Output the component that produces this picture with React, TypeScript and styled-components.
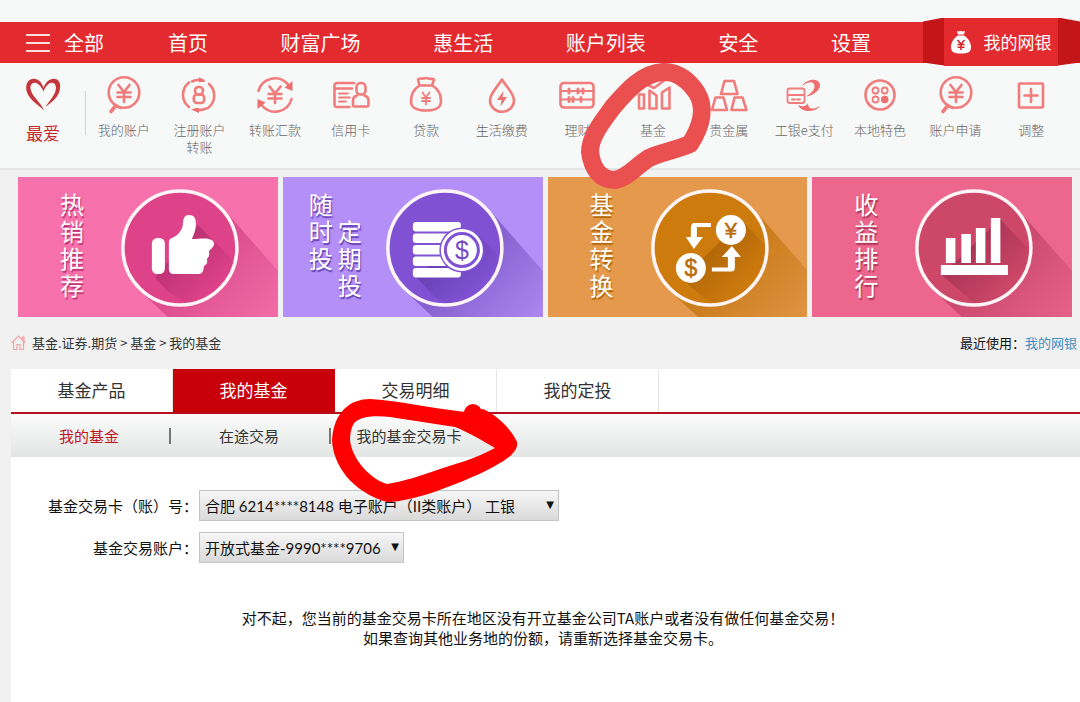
import React from "react";
import styled, { createGlobalStyle, css } from "styled-components";

const GlobalStyle = createGlobalStyle`
  *, *::before, *::after { box-sizing: border-box; }
  body {
    margin: 0;
    background: #f1f1f1;
    color: #222;
    font-family: "Noto Sans CJK SC", "Noto Sans", sans-serif;
    font-weight: 400;
  }
  a { color: inherit; text-decoration: none; }
  button, select { font: inherit; color: inherit; }
  ul { list-style: none; margin: 0; padding: 0; }
`;

const Page = styled.div`
  position: relative;
  display: flex;
  flex-direction: column;
  min-height: 100vh;
  overflow: hidden;
`;

/* ---------- top bar ---------- */

const Header = styled.header`
  padding-top: 22px;
  background: #f7f8f8;
  border-bottom: 2px solid #e4e5e5;
`;

const TopBar = styled.nav`
  display: flex;
  align-items: center;
  height: 41px;
  background: #e32a2f;
  color: #fff;
  font-size: 20px;
  line-height: 28px;
`;

const AllButton = styled.button`
  display: flex;
  align-items: center;
  gap: 14px;
  margin: 0 64px 0 26px;
  padding: 0;
  border: 0;
  background: none;
  white-space: nowrap;
`;

const MenuBars = styled.svg`
  width: 24px;
  height: 20px;
`;

const TopLinks = styled.ul`
  flex: 1;
  display: flex;
  justify-content: space-between;
  padding-right: 52px;
  white-space: nowrap;
`;

const Ribbon = styled.a`
  display: flex;
  height: 48px;
  margin-bottom: 2px;
  font-size: 17px;
  white-space: nowrap;
`;

const Fold = styled.span<{ $side: "left" | "right" }>`
  width: ${(p) => (p.$side === "left" ? 21 : 22)}px;
  background: #c41518;
  clip-path: ${(p) =>
    p.$side === "left"
      ? "polygon(0 4px, 100% 0, 100% 100%, 0 45px)"
      : "polygon(0 0, 100% 4px, 100% 45px, 0 100%)"};
`;

const RibbonFace = styled.span`
  display: flex;
  align-items: center;
  justify-content: center;
  gap: 13px;
  width: 114px;
  background: #e32a2f;
`;

const BagIcon = styled.svg`
  width: 20px;
  height: 24px;
`;

/* ---------- shortcuts ---------- */

const Shortcuts = styled.div`
  display: flex;
  align-items: flex-start;
  height: 105px;
  padding: 14px 11px 0 0;
`;

const Favourite = styled.a`
  display: flex;
  flex-direction: column;
  align-items: center;
  gap: 8px;
  width: 86px;
  color: #c4262e;
  font-size: 17px;
  line-height: 24px;
`;

const Divider = styled.span`
  width: 1px;
  height: 44px;
  margin: 14px 0 0 -1px;
  background: #d5d5d5;
`;

const ShortcutList = styled.ul`
  flex: 1;
  display: grid;
  grid-template-columns: repeat(13, 1fr);
`;

const Shortcut = styled.a`
  display: flex;
  flex-direction: column;
  align-items: center;
  gap: 8px;
  color: #666;
  font-size: 13px;
  font-weight: 300;
  line-height: 17px;
  text-align: center;
  white-space: pre-line;
`;

const Glyph = styled.svg`
  width: 36px;
  height: 36px;
  overflow: visible;
  fill: none;
  stroke: #f07c7c;
  stroke-width: 2.6;
  stroke-linecap: round;
  stroke-linejoin: round;

  .solid { fill: #ee6f6f; stroke: none; }
  .thin { stroke-width: 1.8; }
`;

/* ---------- banners ---------- */

const Banners = styled.section`
  display: grid;
  grid-template-columns: repeat(4, 1fr);
  gap: 5px;
  padding: 7px 8px 0 18px;
`;

const Banner = styled.a<{ $bg: string; $inset: number; $shade: string }>`
  position: relative;
  display: flex;
  gap: 5px;
  height: 140px;
  padding: 13px 0 0 ${(p) => p.$inset}px;
  background: ${(p) => p.$bg};
  color: #fff;
  font-size: 24px;
  line-height: 27px;
  text-shadow: 1px 2px 1px ${(p) => p.$shade};
`;

const Column = styled.span<{ $lowered?: boolean }>`
  position: relative;
  width: 24px;
  padding-top: ${(p) => (p.$lowered ? 27 : 0)}px;
  word-break: break-all;
`;

const Art = styled.svg`
  position: absolute;
  inset: 0;
  width: 100%;
  height: 100%;
  text {
    font-family: "Liberation Sans", sans-serif;
    text-anchor: middle;
    text-shadow: none;
  }
`;

/* ---------- breadcrumb ---------- */

const CrumbBar = styled.div`
  display: flex;
  justify-content: space-between;
  align-items: center;
  height: 52px;
  padding: 0 3px 0 11px;
  font-size: 13px;
  line-height: 20px;
`;

const Crumbs = styled.nav`
  display: flex;
  align-items: center;
  gap: 6px;
  color: #333;
`;

const HomeIcon = styled.svg`
  width: 15px;
  height: 16px;
`;

const Recent = styled.div`
  display: flex;
  color: #111;
  a { color: #3f8fc0; }
`;

/* ---------- content ---------- */

const Content = styled.main`
  flex: 1;
  margin-left: 11px;
  background: #fff;
`;

const Tabs = styled.nav`
  display: flex;
  height: 45px;
  border-bottom: 2px solid #b5101c;
`;

const Tab = styled.a<{ $active?: boolean }>`
  width: 162px;
  border-right: 1px solid #e6e6e6;
  color: #333;
  font-size: 17px;
  line-height: 42px;
  text-align: center;
  ${(p) =>
    p.$active &&
    css`
      background: #c80009;
      border-color: #c80009;
      color: #fff;
    `}
`;

const SubTabs = styled.nav`
  display: flex;
  align-items: center;
  height: 43px;
  background: linear-gradient(#fbfcfb, #e2e5e4);
`;

const SubTab = styled.a<{ $active?: boolean }>`
  width: 158px;
  padding-right: 2px;
  color: ${(p) => (p.$active ? "#c01622" : "#333")};
  font-size: 15px;
  line-height: 22px;
  text-align: center;
`;

const Bar = styled.span`
  width: 2px;
  height: 16px;
  background: #777;
`;

const Form = styled.form`
  display: grid;
  grid-template-columns: 187px auto;
  justify-content: start;
  justify-items: start;
  align-items: center;
  row-gap: 11px;
  padding-top: 33px;
  color: #111;
  font-size: 15px;
  line-height: 22px;
`;

const Label = styled.label`
  justify-self: end;
  white-space: nowrap;
`;

const SelectBox = styled.span<{ $width: number }>`
  position: relative;
  display: block;
  width: ${(p) => p.$width}px;
  margin-left: 1px;

  &::after {
    content: "▼";
    position: absolute;
    top: 4px;
    right: 5px;
    font-family: "DejaVu Sans", sans-serif;
    font-size: 10px;
    pointer-events: none;
  }
`;

const Select = styled.select`
  appearance: none;
  display: block;
  width: 100%;
  height: 31px;
  padding: 0 0 0 5px;
  border: 1px solid #c4c4c4;
  border-radius: 0;
  background: linear-gradient(#f6f6f6, #dadada);
  font-family: Lato, "Noto Sans CJK SC", sans-serif;
`;

const Notice = styled.p`
  margin: 45px 5px 0 0;
  color: #111;
  font-size: 15px;
  line-height: 20px;
  text-align: center;
`;

const Marks = styled.svg`
  position: absolute;
  top: 0;
  left: 0;
  width: 1080px;
  height: 520px;
  pointer-events: none;
  stroke-linecap: round;
  stroke-linejoin: round;
`;

const Magnifier = () => (
  <>
    <circle cx="18" cy="15.5" r="15.3" />
    <path d="M9.5 29 5 34.5" strokeWidth="3.6" />
    <path d="M9 27.5c2 2 4 3 6 3.4" />
    <path d="M12.5 8l5.5 7 5.5-7M18 15v10M11.5 15.5h13M11.5 20h13" />
  </>
);

const shortcuts: { label: string; icon: React.ReactNode }[] = [
  { label: "我的账户", icon: <Magnifier /> },
  {
    label: "注册账户\n转账",
    icon: (
      <>
        <path d="M8 5.5A15.5 15.5 0 0 0 8 30M28 7A15.5 15.5 0 0 1 27 31" />
        <path d="M11 4.5A15.5 15.5 0 0 1 22 3.500M25 31.500A15.500 15.500 0 0 1 14 32.500" />
        <path className="solid" d="M18 0l7 4.400-7 .8zM18 36l-8-3.400 8-1.800z" />
        <rect x="14" y="10" width="8" height="7.500" rx="3.500" />
        <rect x="12.800" y="17.500" width="10.400" height="8.500" rx="3.200" />
      </>
    ),
  },
  {
    label: "转账汇款",
    icon: (
      <>
        <path d="M1.5 14A17 17 0 0 1 31 7.5M34.5 22A17 17 0 0 1 5 28.5" />
        <path className="solid" d="M35.5 4v10l-8-3.5zM.5 32v-10l8 3.5z" />
        <path d="M12.5 9.5l5.5 7 5.5-7M18 16.5v9.5M11.5 17h13M11.5 21.5h13" />
      </>
    ),
  },
  {
    label: "信用卡",
    icon: (
      <>
        <path d="M21 6H4a2.5 2.5 0 0 0-2.5 2.5v19A2.5 2.5 0 0 0 4 30h12.500M1.500 11.500H19" />
        <path className="thin" d="M6 16.500h9M6 20.500h11M6 24.500h7" />
        <rect x="23.500" y="6" width="9" height="11.500" rx="4" />
        <path d="M24 18.500c-3 1-4 2.500-4 5V28c0 1 .5 1.500 1.500 1.500h12c1 0 2-.5 2-1.500v-4.500c0-2.500-1-4-4-5" />
      </>
    ),
  },
  {
    label: "贷款",
    icon: (
      <>
        <path d="M11.500 8.500 10 2.500c2-2 4-.5 5.500-1s3-1 5 0 3.500-.5 5.500 1l-2 6zM11.500 8.500C6 12 3 18 3 24c0 7 5 9.500 15 9.500S33 31 33 24c0-6-3-12-8.500-15.500" />
        <path className="thin" d="M14.500 15.500l3.500 5 3.500-5M18 20.500v7M14 21h8M14 24h8" />
      </>
    ),
  },
  {
    label: "生活缴费",
    icon: (
      <>
        <path d="M18 2.500C14 9.500 6 16 6 23.500a12 11.300 0 0 0 24 0C30 16 22 9.500 18 2.500z" />
        <path className="solid" d="M19.500 14l-6.500 9h4.500l-1 6.500 6.500-9.500h-4.500z" />
      </>
    ),
  },
  {
    label: "理财",
    icon: (
      <>
        <rect x="1.500" y="6" width="33" height="24.500" rx="3.500" />
        <path d="M2 14h32M2 22.500h32" className="thin" />
        <path d="M10 12v4M19 12v4M24 12v4M10 20.500v4M14 20.500v4M22 20.500v4" strokeWidth="3" />
      </>
    ),
  },
  {
    label: "基金",
    icon: (
      <>
        <path d="M4 17.500h5v14H4zM14.500 31.500v-18l7 5v13zM27 31.500V15.500l7.500-5v21z" />
        <path d="M4 13l7-6 8 4L34 0" />
      </>
    ),
  },
  {
    label: "贵金属",
    icon: (
      <path d="M13.500 4h9.500l3.500 13h-16.500zM4.500 20.500h8l3.500 12.500h-15zM23.500 20.500h8l4 12.500h-15z" />
    ),
  },
  {
    label: "工银e支付",
    icon: (
      <>
        <rect x="1.500" y="11.500" width="17" height="14.500" rx="2" className="thin" />
        <path className="thin" d="M2 18h16M6 22.500h3M11 22.500h3" />
        <path
          className="solid"
          d="M16 9C19 4 26 1.500 31 3.500c6 3 3 12-8 15.500-1 .3-2 .3-2.500 0C26 16 30 11 28 7c-2-3-7-2-12 2zM12 28c4 2 8 2 10-2 0 7 6 7 12.500 2.500C29 36 16 36 12 28z"
        />
      </>
    ),
  },
  {
    label: "本地特色",
    icon: (
      <>
        <circle cx="18" cy="18" r="14.500" />
        <circle cx="13.500" cy="13.500" r="3" className="thin" />
        <circle cx="22.700" cy="13.500" r="3" className="thin" />
        <circle cx="13.500" cy="22.500" r="3" className="thin" />
        <circle cx="22.700" cy="22.500" r="3.800" className="solid" />
      </>
    ),
  },
  { label: "账户申请", icon: <Magnifier /> },
  {
    label: "调整",
    icon: (
      <>
        <rect x="6" y="6.500" width="24" height="24" rx="1" />
        <path d="M18 12v13M11.500 18.500h13" />
      </>
    ),
  },
];

type BannerData = {
  id: string;
  columns: string[];
  inset: number;
  bg: string;
  disc: string;
  dark: string;
  cast: string;
  inner: string;
  icon: React.ReactNode;
};

const banners: BannerData[] = [
  {
    id: "hot",
    columns: ["热销推荐"],
    inset: 42,
    bg: "#f772ac",
    disc: "#de4289",
    dark: "#bd3275",
    cast: "#dd4f90",
    inner: "M180 48 230 98 190 140 152 116 137 101z",
    icon: (
      <g fill="#fff">
        <rect x="134" y="61" width="13" height="36" rx="5.500" />
        <path d="M151 65c0-2 1-3 3-4 7-3 10-8 11-13 0-5 1-10 6-10 6 0 7 4 7 9 0 6-2 10-4 15 6 0 13-1 17 0 4 1 6 3 5 6-1 3-4 5-5 6 1 4 0 6-2 8 1 4 0 5-3 7 0 5-2 8-5 8h-25c-3 0-5-2-5-5z" />
      </g>
    ),
  },
  {
    id: "plan",
    columns: ["随时投", "定期投"],
    inset: 26,
    bg: "#b48ff7",
    disc: "#8052d3",
    dark: "#6840b3",
    cast: "#8761cf",
    inner: "M194 56 240 106 190 140 152 120 132 99z",
    icon: (
      <>
        <g fill="#fff">
          <rect x="130" y="45" width="48" height="9.500" rx="3" />
          <rect x="130" y="56.500" width="48" height="9.500" rx="3" />
          <rect x="130" y="68" width="48" height="9.500" rx="3" />
          <rect x="130" y="79.500" width="48" height="9.500" rx="3" />
          <rect x="130" y="91" width="48" height="9.500" rx="3" />
        </g>
        <circle cx="179" cy="73" r="22.500" fill="#8052d3" />
        <circle cx="179" cy="73" r="19.500" fill="#8052d3" stroke="#fff" strokeWidth="3" />
        <circle cx="179" cy="73" r="15" fill="#fff" />
        <text x="179" y="82" fontSize="25" fill="#7749c6">$</text>
      </>
    ),
  },
  {
    id: "switch",
    columns: ["基金转换"],
    inset: 42,
    bg: "#e5994c",
    disc: "#ce7b0e",
    dark: "#b06708",
    cast: "#cb7d1c",
    inner: "M194 43 240 94 190 140 160 124 134 102z",
    icon: (
      <>
        <circle cx="183" cy="53" r="15" fill="#fff" />
        <circle cx="143" cy="91" r="15" fill="#fff" />
        <text x="183" y="61" fontSize="22" fill="#b96d0c" stroke="#b96d0c" strokeWidth="0.500">¥</text>
        <text x="143" y="99" fontSize="23" fill="#b96d0c" stroke="#b96d0c" strokeWidth="0.500">$</text>
        <path fill="#fff" d="M163 46v4h-14v10h6l-9 12-8-12h5V51c0-3 1-5 4-5zM164 94.500v-4h16V80h-6l10-11 9 11h-6v10c0 3-1 4.500-4 4.500z" />
      </>
    ),
  },
  {
    id: "rank",
    columns: ["收益排行"],
    inset: 42,
    bg: "#ec668d",
    disc: "#cd4768",
    dark: "#ac3656",
    cast: "#cc4a70",
    inner: "M188 42 234 90 190 140 160 124 130 98z",
    icon: (
      <g fill="#fff">
        <rect x="134" y="61" width="9.500" height="25" />
        <rect x="149.500" y="57" width="9.500" height="29" />
        <rect x="164" y="51" width="9.500" height="35" />
        <rect x="179" y="41" width="9.500" height="45" />
        <rect x="129" y="88" width="67" height="10" />
      </g>
    ),
  },
];

const BannerArt = ({ data }: { data: BannerData }) => (
  <Art viewBox="0 0 260 140" preserveAspectRatio="xMidYMid slice" aria-hidden="true">
    <defs>
      <linearGradient id={`${data.id}-cast`} gradientUnits="userSpaceOnUse" x1="185" y1="90" x2="260" y2="165">
        <stop offset="0" stopColor={data.cast} />
        <stop offset="1" stopColor={data.bg} />
      </linearGradient>
      <linearGradient id={`${data.id}-inner`} gradientUnits="userSpaceOnUse" x1="162" y1="71" x2="200" y2="109">
        <stop offset="0" stopColor={data.dark} />
        <stop offset="1" stopColor={data.disc} />
      </linearGradient>
      <clipPath id={`${data.id}-disc`}>
        <circle cx="162" cy="71" r="57" />
      </clipPath>
    </defs>
    <path d="M204 30 260 94V140H150L120 112z" fill={`url(#${data.id}-cast)`} />
    <circle cx="162" cy="71" r="57" fill={data.disc} />
    <path d={data.inner} fill={`url(#${data.id}-inner)`} clipPath={`url(#${data.id}-disc)`} />
    <circle cx="162" cy="71" r="57" fill="none" stroke="#fff4f6" strokeWidth="3.500" />
    {data.icon}
  </Art>
);

const topLinks = ["首页", "财富广场", "惠生活", "账户列表", "安全", "设置"];

export default function App() {
  return (
    <Page>
      <GlobalStyle />
      <Header>
        <TopBar>
          <AllButton type="button">
            <MenuBars viewBox="0 0 24 20" stroke="#fbdcdc" strokeWidth="2" aria-hidden="true">
              <path d="M0 2h24M0 10h24M0 18h24" />
            </MenuBars>
            全部
          </AllButton>
          <TopLinks>
            {topLinks.map((t) => (
              <li key={t}>
                <a href="#">{t}</a>
              </li>
            ))}
          </TopLinks>
          <Ribbon href="#">
            <Fold $side="left" />
            <RibbonFace>
              <BagIcon viewBox="0 0 20 24" aria-hidden="true">
                <path fill="#fff" d="M6 1c2 .8 3-.4 4 0s2 .8 4 0l-1 3.500H7zM7 5.500h6c4 2.500 7 7 7 11.500 0 5-3 6.500-10 6.500S0 22 0 17C0 12.500 3 8 7 5.500z" />
                <path fill="none" stroke="#d5262b" strokeWidth="1.600" d="M6.500 10l3.500 4 3.500-4M10 14v6M6.500 14.500h7M6.500 17.200h7" />
              </BagIcon>
              我的网银
            </RibbonFace>
            <Fold $side="right" />
          </Ribbon>
        </TopBar>
        <Shortcuts>
          <Favourite href="#">
            <Glyph viewBox="0 0 36 36" aria-hidden="true">
              <path
                fill="#c4363c"
                stroke="none"
                d="M18.500 11C16.500 4 11.500 1 7 2 1 3.500 0 10.500 2.500 16.500 5 23 13 27.500 19 33.500 16.500 26.500 10 22 7 16 4.500 11 5 7 8.500 6c4-1 7.500 3 10 8.500C21 8 25 5 28 6c3.500 1 3.500 5.500 2 9.500C28 20.500 24 24.500 20.500 30c6-4.500 11.500-9 13.500-14.500C36.500 9 35 3 30.500 2 25 1 20.500 5 18.500 11z"
              />
            </Glyph>
            最爱
          </Favourite>
          <Divider />
          <ShortcutList>
            {shortcuts.map((s) => (
              <li key={s.label}>
                <Shortcut href="#">
                  <Glyph viewBox="0 0 36 36" aria-hidden="true">
                    {s.icon}
                  </Glyph>
                  {s.label}
                </Shortcut>
              </li>
            ))}
          </ShortcutList>
        </Shortcuts>
      </Header>

      <Banners>
        {banners.map((b) => (
          <Banner key={b.id} href="#" $bg={b.bg} $inset={b.inset} $shade={b.dark}>
            <BannerArt data={b} />
            {b.columns.map((c, i) => (
              <Column key={c} $lowered={i > 0}>
                {c}
              </Column>
            ))}
          </Banner>
        ))}
      </Banners>

      <CrumbBar>
        <Crumbs>
          <HomeIcon viewBox="0 0 15 16" fill="none" stroke="#f0a3a3" strokeWidth="1.200" aria-hidden="true">
            <path d="M.700 8 7.500 1.200 14.300 8M2.500 7v7.500h3.500V9.500h3v5h3.500V7M11.500 4.500V2h1.500v4" />
          </HomeIcon>
          <span>基金.证券.期货 &gt; 基金 &gt; 我的基金</span>
        </Crumbs>
        <Recent>
          <span>最近使用：</span>
          <a href="#">我的网银</a>
        </Recent>
      </CrumbBar>

      <Content>
        <Tabs>
          <Tab href="#">基金产品</Tab>
          <Tab href="#" $active>我的基金</Tab>
          <Tab href="#">交易明细</Tab>
          <Tab href="#">我的定投</Tab>
        </Tabs>
        <SubTabs>
          <SubTab href="#" $active>我的基金</SubTab>
          <Bar />
          <SubTab href="#">在途交易</SubTab>
          <Bar />
          <SubTab href="#">我的基金交易卡</SubTab>
        </SubTabs>
        <Form>
          <Label htmlFor="card">基金交易卡（账）号：</Label>
          <SelectBox $width={360}>
            <Select id="card">
              <option>合肥 6214****8148 电子账户（II类账户） 工银</option>
            </Select>
          </SelectBox>
          <Label htmlFor="account">基金交易账户：</Label>
          <SelectBox $width={205}>
            <Select id="account">
              <option>开放式基金-9990****9706</option>
            </Select>
          </SelectBox>
        </Form>
        <Notice>
          对不起，您当前的基金交易卡所在地区没有开立基金公司TA账户或者没有做任何基金交易！
          <br />
          如果查询其他业务地的份额，请重新选择基金交易卡。
        </Notice>
      </Content>

      <Marks viewBox="0 0 1080 520" aria-hidden="true">
        <path
          fill="none"
          stroke="#e9504f"
          strokeWidth="18"
          d="M663 72C678 71 690 82 697 93 705 106 703 124 690 144 676 150 660 153 649 158 636 166 628 178 615 180 600 180 592 168 590 152 590 136 603 121 613 107 626 92 642 73 663 72z"
        />
        <g fill="#fe0000">
          <path
            fillRule="evenodd"
            d="M370 399C350 399 334 412 332 440 333 465 352 492 387 502 400 502 420 497 437 491 465 481 495 468 509 457 516 451 518 446 517 442 512 430 497 415 483 409L465 412C430 408 395 400 370 399zM353 425C357 416 375 415 390 417L455 427C468 432 483 441 495 448 475 459 455 464 437 470 420 476 405 481 387 484 372 480 352 460 350 440 350 434 351 429 353 425z"
          />
          <circle cx="473" cy="413" r="9" />
        </g>
      </Marks>
    </Page>
  );
}
